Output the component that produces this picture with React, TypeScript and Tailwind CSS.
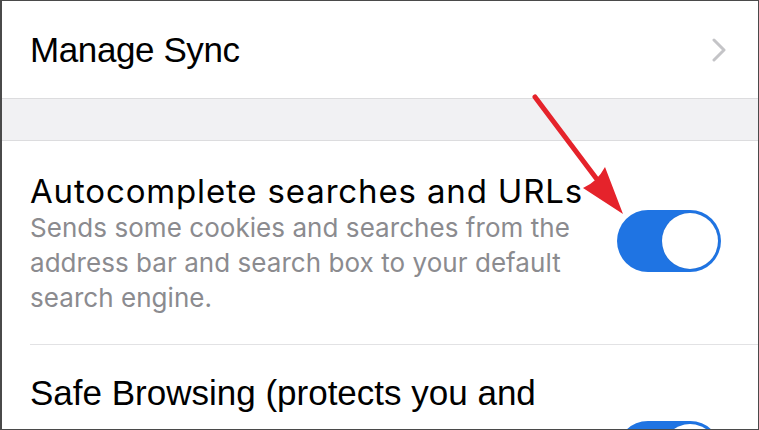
import React from 'react';

function Toggle() {
  return (
    <div className="flex h-[62px] w-[104px] shrink-0 items-center justify-end rounded-full bg-[#1f74e3] p-[3px]">
      <div className="size-[56px] rounded-full bg-white shadow-[0_0_1px_rgba(0,0,0,0.2)]" />
    </div>
  );
}

function Chevron() {
  return (
    <svg width="14" height="24" viewBox="0 0 14 24" fill="none" className="shrink-0">
      <path d="M2 2l10 10-10 10" stroke="#c4c4c7" strokeWidth="3" strokeLinecap="round" strokeLinejoin="round" />
    </svg>
  );
}

function Arrow() {
  return (
    <svg
      className="pointer-events-none absolute left-0 top-0"
      width="759"
      height="430"
      viewBox="0 0 759 430"
    >
      <line x1="533" y1="96" x2="603" y2="189" stroke="#e5232b" strokeWidth="5" strokeLinecap="round" />
      <path d="M621 213L581 187Q595 181 603 166Z" fill="#e5232b" />
    </svg>
  );
}

export default function App() {
  return (
    <div className="relative h-[430px] w-[759px] overflow-hidden border border-l-2 border-[#4a4a4a] bg-white font-['Inter',sans-serif]">
      <div className="flex h-[97px] items-center justify-between pl-[28px] pr-[32px]">
        <span className="font-['Liberation_Sans',Arial,sans-serif] text-[35px] leading-none tracking-[-0.4px] text-black">
          Manage Sync
        </span>
        <Chevron />
      </div>
      <div className="h-[43px] border-y border-[#dcdcde] bg-[#f1f1f3]" />
      <div className="pl-[28px]">
        <div className="flex items-start justify-between border-b border-[#e2e2e4] pb-[29px] pr-[37px] pt-[31px]">
          <div className="flex flex-col">
            <span className="text-[33px] leading-[38px] tracking-[0.85px] text-black">
              Autocomplete searches and URLs
            </span>
            <p className="w-[565px] text-[26px] leading-[35px] tracking-[0.05px] text-[#8b8b8f]">
              Sends some cookies and searches from the address bar and search box to your default search engine.
            </p>
          </div>
          <div className="mt-[38px]">
            <Toggle />
          </div>
        </div>
        <div className="flex items-start justify-between pr-[37px] pt-[23px]">
          <span className="w-[545px] font-['Liberation_Sans',Arial,sans-serif] text-[35px] leading-[50px] tracking-[0px] text-black">
            Safe Browsing (protects you and your device from dangerous sites)
          </span>
          <div className="mt-[53px]">
            <Toggle />
          </div>
        </div>
      </div>
      <Arrow />
    </div>
  );
}
